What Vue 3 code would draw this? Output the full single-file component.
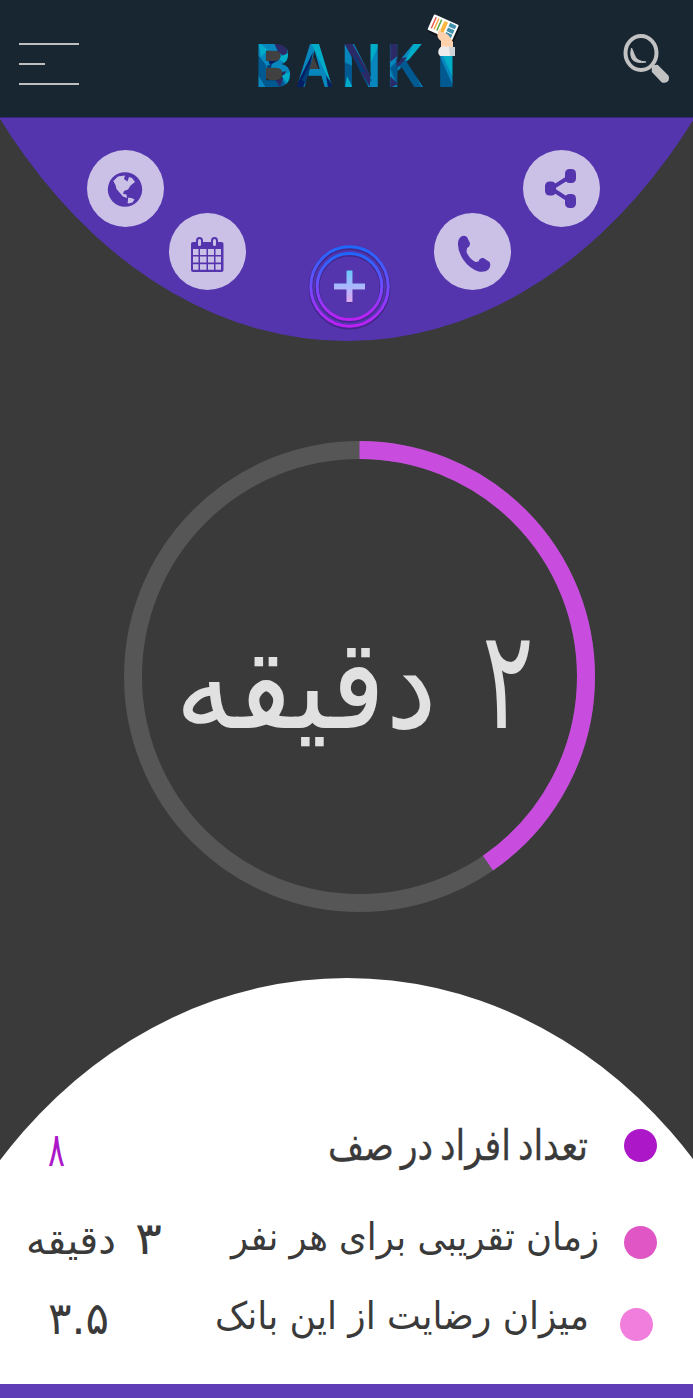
<script setup>
const letters = [
  { ch: 'B', x: 255, sx: 0.824 },
  { ch: 'A', x: 295.5, sx: 0.838 },
  { ch: 'N', x: 341, sx: 0.89 },
  { ch: 'K', x: 386.5, sx: 0.813 },
  { ch: 'I', x: 434.5, sx: 1.35 }
]
const actions = [
  { id: 'globe', x: 87, y: 32 },
  { id: 'calendar', x: 169, y: 95 },
  { id: 'phone', x: 434, y: 95 },
  { id: 'share', x: 523, y: 32 }
]
const rows = [
  {
    id: 'queue', label: 'تعداد افراد در صف', w: 260, size: 42, bold: true, base: 31,
    values: [{ t: '۸', right: 65, w: 17, size: 47, base: 37 }]
  },
  {
    id: 'time', label: 'زمان تقریبی برای هر نفر', w: 368, size: 38, base: 30,
    values: [
      { t: '۳', right: 162, w: 27, size: 45, base: 34 },
      { t: 'دقیقه', right: 116, w: 90, size: 40, base: 34 }
    ]
  },
  {
    id: 'rate', label: 'میزان رضایت از این بانک', w: 374, size: 38, base: 29,
    values: [{ t: '۳.۵', right: 109, w: 61, size: 45, base: 34 }]
  }
]
</script>

<template>
  <main class="screen">
    <header class="bar">
      <button class="menu" aria-label="menu"><i></i><i class="short"></i><i></i></button>
      <svg class="logo" width="216" height="100" viewBox="250 0 216 100">
        <defs>
          <pattern v-for="l in letters" :id="'facets-' + l.ch" :key="l.ch" patternUnits="userSpaceOnUse" x="250" y="40" width="216" height="50" viewBox="0 0 216 50" :patternTransform="`scale(${1 / l.sx} 1) translate(${-l.x} 0)`">
            <rect width="216" height="50" fill="#0787bd" />
            <path fill="#005a91" d="M8 15L16 25V48L8 35ZM16 40L30 36L38 48H16ZM94 22L103 26V48H94ZM103 15L122 40L116 48ZM140 28L148 20L148 48ZM147 22L158 18L172 48H162ZM188 12L204 48H190Z" />
            <path fill="#2b2a66" d="M24 3H36L38 19L28 12ZM22 35L36 31L30 47ZM94 3L102 3L120 35V47L100 14ZM140 3L147 3L148 16L140 22ZM146 19L158 17L147 28ZM140 36L148 44L140 48Z" />
            <path fill="#061f63" d="M45 48L63 12L60 28L53 48ZM17 17L29 20L20 25ZM76 35L84 48H78Z" />
            <path fill="#00adc8" d="M9 3L18 10L11 17ZM28 18L40 12L36 24ZM31 36L40 32L38 43ZM61 3H70L84 44L78 38ZM119 3H130L120 24ZM175 3L160 19L155 21L164 3ZM190 10L206 8V44ZM97 36L103 48H95Z" />
            <path fill="#003d78" d="M17 26L22 24L17 40ZM52 40L61 21L57 44ZM103 13L116 33L110 31Z" />
          </pattern>
        </defs>
        <rect x="265" y="50" width="17" height="30" rx="5" fill="#414141" />
        <path d="M313 56l6 14h-10z" fill="#414141" />
        <text v-for="l in letters" :key="l.ch" class="logo-letter" :transform="`translate(${l.x} 87.5) scale(${l.sx} 1) translate(0 -87.5)`" x="0" y="87.500" :fill="`url(#facets-${l.ch})`">{{ l.ch }}</text>
        <path d="M434 35h24v21h-24z" fill="#182632" />
        <g transform="translate(0 1) rotate(24 443 28)">
          <rect x="430" y="18" width="28" height="19" rx="2" fill="#101519" />
          <rect x="429" y="18" width="27" height="17" rx="1" fill="#fff" />
          <path d="M432 20v12" stroke="#e85445" stroke-width="1.4" />
          <path d="M435 20v12" stroke="#f8a53b" stroke-width="1.4" />
          <path d="M438 20v12" stroke="#55a842" stroke-width="1.4" />
          <rect x="441" y="20" width="4" height="12" fill="#f9b63f" />
          <path d="M447 19.500h7v4h-7zM447 24.500h7v4h-7zM447 29.500h7v4h-7z" fill="#408fab" />
        </g>
        <path d="M438 32q2-5 3-3v3q5 0 9 5l3 5v6h-12v-7q-5-3-3-9z" fill="#ffd1ad" />
        <path d="M439 49q1-3 4-2.500l11 .5v9h-14q-3-3-1-7z" fill="#ececec" />
        <path d="M449 47h6v9h-5z" fill="#d0d3d5" />
      </svg>
      <svg class="search" width="50" height="54" viewBox="0 0 50 54">
        <ellipse cx="19" cy="19" rx="15.500" ry="17" fill="none" stroke="#c2c2c2" stroke-width="4" />
        <path d="M9.500 14q-4 17 14.500 14q-10-.5-12-8Q11 17 9.500 14z" fill="#c2c2c2" stroke="#c2c2c2" stroke-width="1" />
        <path d="M31 32.500l4-.5 10.500 10.500q1.500 4-3 5h-2l-9.500-10z" fill="#c2c2c2" stroke="#c2c2c2" stroke-width="2.500" stroke-linejoin="round" />
      </svg>
    </header>

    <section class="dome">
      <svg class="dome-bg" width="693" height="224" viewBox="0 118 693 224">
        <ellipse cx="347" cy="-292" rx="456" ry="633" fill="#5435ae" />
      </svg>
      <button v-for="a in actions" :key="a.id" class="action" :style="{ left: a.x + 'px', top: a.y + 'px' }" :aria-label="a.id">
        <svg v-if="a.id === 'globe'" width="77" height="77" viewBox="87 150 77 77">
          <circle cx="125" cy="189.500" r="17.200" fill="#5435ae" />
          <path d="M113.300 181l4.700-4.500 7-1-1 3.500 3.500 2.500 1.500-4.500 3 1 3 4-4.500 3.500-2.500 4-4 1.500-1 3 3.500.5.500 3.500-4-1.500-3.500-4-3-3.500-1-4z" fill="#cbc1e7" />
          <path d="M128 197.800l3.500.2 3 1.500-2 3-4 1-1-.5.5-2.500z" fill="#cbc1e7" />
        </svg>
        <svg v-else-if="a.id === 'calendar'" width="77" height="77" viewBox="169 213 77 77">
          <rect x="191" y="242" width="32.500" height="30" rx="2" fill="#5435ae" />
          <path d="M193 249h5.500v6H193zM200 249h6.500v6H200zM208 249h6v6h-6zM215.500 249h5.500v6h-5.500zM193 256.500h5.500v6H193zM200 256.500h6.500v6H200zM208 256.500h6v6h-6zM215.500 256.500h5.500v6h-5.500zM193 264.300h5.500v5.500H193zM200 264.300h6.500v5.500H200zM208 264.300h6v5.500h-6zM215.500 264.300h5.500v5.500h-5.500z" fill="#cbc1e7" />
          <rect x="197" y="238" width="5" height="9" rx="2.500" fill="#cbc1e7" stroke="#5435ae" stroke-width="2" />
          <rect x="212" y="238" width="5" height="9" rx="2.500" fill="#cbc1e7" stroke="#5435ae" stroke-width="2" />
        </svg>
        <svg v-else-if="a.id === 'phone'" width="77" height="77" viewBox="434 213 77 77">
          <path d="M460 237.500q3-3 7-.5l3 6q0 4-3 5l-.5 4q3 7 9 10l3-.5q1-4 5-3.500l6 4q2 4-1 7.500-3 3-10 2-9-3-15-11.500-6-9-5.500-17 .5-4 2-5.500z" fill="#5435ae" />
        </svg>
        <svg v-else width="77" height="77" viewBox="523 150 77 77">
          <path d="M571 176l-20 12.500 20 13" fill="none" stroke="#5435ae" stroke-width="4" />
          <rect x="565" y="169" width="11" height="14" rx="4.500" fill="#5435ae" />
          <rect x="545" y="181.500" width="11" height="14" rx="4.500" fill="#5435ae" />
          <rect x="565" y="194" width="11" height="14" rx="4.500" fill="#5435ae" />
        </svg>
      </button>
      <svg class="plus" width="84" height="86" viewBox="307 244 84 86">
        <defs>
          <linearGradient id="ring" x1="0" y1="0" x2="0" y2="1">
            <stop offset="0" stop-color="#1f68ff" />
            <stop offset=".5" stop-color="#704aff" />
            <stop offset="1" stop-color="#bd20f4" />
          </linearGradient>
          <linearGradient id="cross" x1="0" y1="0" x2="0" y2="1">
            <stop offset="0" stop-color="#68c8fb" />
            <stop offset=".5" stop-color="#a9b8ff" />
            <stop offset="1" stop-color="#dfa8ee" />
          </linearGradient>
        </defs>
        <g fill="none" stroke="#382078" stroke-width="4.500" opacity=".65">
          <ellipse cx="349.500" cy="287.500" rx="38.700" ry="39.700" />
          <ellipse cx="349.500" cy="287.300" rx="32.300" ry="33" />
        </g>
        <g fill="none" stroke="url(#ring)" stroke-width="3">
          <ellipse cx="349.500" cy="286.500" rx="38.700" ry="39.700" />
          <ellipse cx="349.500" cy="286.500" rx="32.300" ry="33" />
        </g>
        <path d="M347 271h5.500v13H365v6h-12.500v13H347v-13h-13v-6h13z" fill="#382078" opacity=".5" />
        <path d="M347 270.500h5q.5 0 .5.500v12.500H365v6h-12.500V302H346.500v-12.500H334v-6h12.500V271q0-.5.500-.5z" fill="url(#cross)" />
      </svg>
    </section>

    <section class="timer">
      <svg width="472" height="472" viewBox="0 0 472 472">
        <circle cx="235.500" cy="235.500" r="226.500" class="track" />
        <circle cx="235.500" cy="235.500" r="226.500" class="progress" pathLength="1000" stroke-dasharray="404 596" transform="rotate(-90 235.500 235.500)" />
        <text class="fa big" x="410" y="287" textLength="52" lengthAdjust="spacingAndGlyphs" font-size="138">۲</text>
        <text class="fa big" x="313" y="287" textLength="262" lengthAdjust="spacingAndGlyphs" font-size="126">دقیقه</text>
      </svg>
    </section>

    <section class="stats">
      <svg class="hill" width="693" height="183" viewBox="0 978 693 183">
        <ellipse cx="347" cy="1503" rx="458" ry="525" fill="#fff" />
      </svg>
      <div class="rows">
        <div v-for="r in rows" :key="r.id" class="row" :class="r.id">
          <svg class="values" width="190" height="40">
            <text v-for="v in r.values" :key="v.t" class="fa" :x="v.right" :y="v.base" :font-size="v.size" :textLength="v.w" lengthAdjust="spacingAndGlyphs">{{ v.t }}</text>
          </svg>
          <svg class="label" :width="r.w" height="40">
            <text class="fa" :class="{ strong: r.bold }" :x="r.w" :y="r.base" :font-size="r.size" :textLength="r.w" lengthAdjust="spacingAndGlyphs">{{ r.label }}</text>
          </svg>
          <span class="dot"></span>
        </div>
      </div>
    </section>
    <footer class="foot"></footer>
  </main>
</template>

<style>
body { margin: 0; background: #3a3a3a; }
</style>

<style scoped>
.screen { width: 693px; height: 1398px; display: flex; flex-direction: column; background: #3a3a3a; overflow: hidden; font-family: "DejaVu Sans", sans-serif; }
svg { display: block; overflow: visible; }
button { border: 0; padding: 0; background: none; }
.bar { box-sizing: border-box; height: 118px; flex: none; display: flex; align-items: flex-start; justify-content: space-between; padding: 0 21px 0 19px; background: #182632; border-bottom: 1px solid #39257b; }
.menu { width: 60px; height: 42px; margin-top: 43px; display: flex; flex-direction: column; justify-content: space-between; }
.menu i { width: 60px; height: 2px; background: #bfbfbf; }
.menu .short { width: 26px; }
.logo { margin-left: 14px; }
.logo-letter { font: bold 63px "Liberation Sans", Arial, sans-serif; }
.search { margin-top: 34px; }
.dome { position: relative; height: 224px; flex: none; }
.dome-bg { overflow: hidden; }
.action { position: absolute; width: 77px; height: 77px; border-radius: 50%; background: #cbc1e7; }
.plus { position: absolute; left: 307px; top: 126px; }
.timer { height: 636px; flex: none; box-sizing: border-box; padding: 99px 0 0 124px; }
.track { fill: none; stroke: #565656; stroke-width: 18; }
.progress { fill: none; stroke: #c84ddf; stroke-width: 18; }
.fa { direction: rtl; font-family: "DejaVu Sans", sans-serif; fill: #3a3a3a; }
.strong { word-spacing: -5px; stroke: #3a3a3a; stroke-width: .3; }
.big { fill: #e1e1e1; }
.stats { height: 406px; flex: none; display: flex; flex-direction: column; }
.hill { flex: none; overflow: hidden; }
.rows { flex: 1; background: #fff; }
.row { display: flex; align-items: flex-start; height: 40px; }
.values { flex: none; margin-right: auto; }
.label { flex: none; }
.dot { flex: none; width: 33px; height: 33px; border-radius: 50%; }
.queue { margin-top: -32px; padding-right: 36px; }
.queue .label { margin-right: 36px; }
.queue .dot { background: #ac18c8; }
.queue .values .fa { fill: #ac18c8; }
.time { margin-top: 51px; padding-right: 36px; }
.time .label { margin-right: 25px; }
.time .dot { background: #e056c5; margin-top: 6px; }
.rate { margin-top: 40px; padding-right: 40px; }
.rate .label { margin-right: 31px; }
.rate .dot { background: #f17edc; margin-top: 8px; }
.foot { height: 14px; flex: none; background: #5e3db6; }
</style>
